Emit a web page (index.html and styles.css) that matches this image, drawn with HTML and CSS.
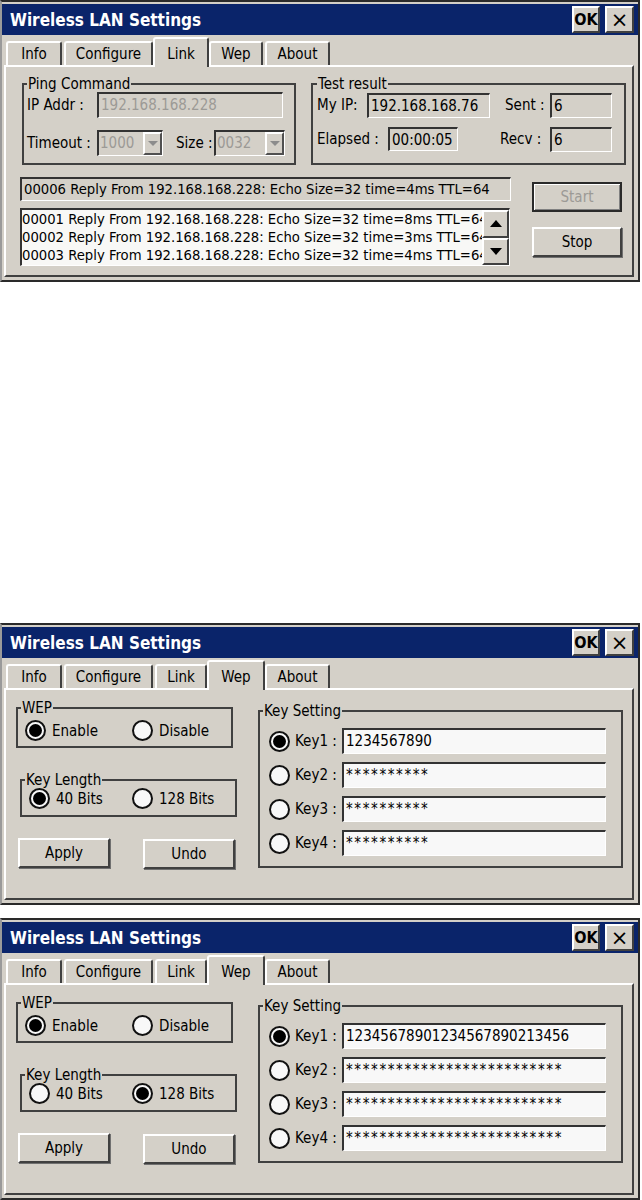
FILE: index.html
```html
<!DOCTYPE html>
<html lang="en">
<head>
    <meta charset="UTF-8">
    <meta name="viewport" content="width=device-width, initial-scale=1.0">
    <title>Wireless LAN Settings</title>
    <link rel="stylesheet" href="styles.css">
</head>
<body>
    <!-- Link page -->
    <div class="dialog">
        <div class="titlebar">
            <span class="title">Wireless LAN Settings</span>
            <span class="tbtn ok">OK</span>
            <span class="tbtn close">&#215;</span>
        </div>
        <div class="tabs">
            <div class="tab t-info">Info</div>
            <div class="tab t-conf">Configure</div>
            <div class="tab t-link active">Link</div>
            <div class="tab t-wep">Wep</div>
            <div class="tab t-about">About</div>
        </div>
        <div class="panel">
            <div class="groups">
                <fieldset class="group ping">
                    <legend>Ping Command</legend>
                    <div class="row">
                        <span class="lbl w70">IP Addr :</span>
                        <div class="edit disabled ip-addr">192.168.168.228</div>
                    </div>
                    <div class="row">
                        <span class="lbl w70">Timeout :</span>
                        <div class="combo c-timeout"><span class="combo-text">1000</span><span class="combo-btn"></span></div>
                        <span class="lbl size-lbl">Size :</span>
                        <div class="combo c-size"><span class="combo-text">0032</span><span class="combo-btn"></span></div>
                    </div>
                </fieldset>
                <fieldset class="group result">
                    <legend>Test result</legend>
                    <div class="row">
                        <span class="lbl myip-lbl">My IP:</span>
                        <div class="edit myip">192.168.168.76</div>
                        <span class="lbl sent-lbl">Sent :</span>
                        <div class="edit count">6</div>
                    </div>
                    <div class="row row2">
                        <span class="lbl elapsed-lbl">Elapsed :</span>
                        <div class="edit elapsed">00:00:05</div>
                        <span class="lbl recv-lbl">Recv :</span>
                        <div class="edit count">6</div>
                    </div>
                </fieldset>
            </div>
            <div class="log">
                <div class="log-left">
                    <div class="edit status">00006 Reply From 192.168.168.228: Echo Size=32 time=4ms TTL=64</div>
                    <div class="listbox">
                        <div class="lines">
                            <div>00001 Reply From 192.168.168.228: Echo Size=32 time=8ms TTL=64</div>
                            <div>00002 Reply From 192.168.168.228: Echo Size=32 time=3ms TTL=64</div>
                            <div>00003 Reply From 192.168.168.228: Echo Size=32 time=4ms TTL=64</div>
                        </div>
                        <div class="vscroll">
                            <span class="sb-btn"><span class="arrow up"></span></span>
                            <span class="sb-btn"><span class="arrow down"></span></span>
                        </div>
                    </div>
                </div>
                <div class="log-right">
                    <div class="btn default disabled">Start</div>
                    <div class="btn stop">Stop</div>
                </div>
            </div>
        </div>
    </div>

    <!-- Wep page, 40 bits -->
    <div class="dialog second">
        <div class="titlebar">
            <span class="title">Wireless LAN Settings</span>
            <span class="tbtn ok">OK</span>
            <span class="tbtn close">&#215;</span>
        </div>
        <div class="tabs">
            <div class="tab t-info">Info</div>
            <div class="tab t-conf">Configure</div>
            <div class="tab t-link">Link</div>
            <div class="tab t-wep active">Wep</div>
            <div class="tab t-about">About</div>
        </div>
        <div class="panel wep-panel">
            <div class="wep-left">
                <fieldset class="group wep-box">
                    <legend>WEP</legend>
                    <div class="opts">
                        <span class="opt first"><span class="radio on"></span>Enable</span>
                        <span class="opt"><span class="radio"></span>Disable</span>
                    </div>
                </fieldset>
                <fieldset class="group keylen-box">
                    <legend>Key Length</legend>
                    <div class="opts">
                        <span class="opt first"><span class="radio on"></span>40 Bits</span>
                        <span class="opt"><span class="radio"></span>128 Bits</span>
                    </div>
                </fieldset>
                <div class="actions">
                    <div class="btn apply">Apply</div>
                    <div class="btn undo">Undo</div>
                </div>
            </div>
            <fieldset class="group keys-box">
                <legend>Key Setting</legend>
                <div class="key-row">
                    <span class="radio on"></span><span class="lbl key-lbl">Key1 :</span>
                    <div class="edit key">1234567890</div>
                </div>
                <div class="key-row">
                    <span class="radio"></span><span class="lbl key-lbl">Key2 :</span>
                    <div class="edit key masked">**********</div>
                </div>
                <div class="key-row">
                    <span class="radio"></span><span class="lbl key-lbl">Key3 :</span>
                    <div class="edit key masked">**********</div>
                </div>
                <div class="key-row">
                    <span class="radio"></span><span class="lbl key-lbl">Key4 :</span>
                    <div class="edit key masked">**********</div>
                </div>
            </fieldset>
        </div>
    </div>

    <!-- Wep page, 128 bits -->
    <div class="dialog third">
        <div class="titlebar">
            <span class="title">Wireless LAN Settings</span>
            <span class="tbtn ok">OK</span>
            <span class="tbtn close">&#215;</span>
        </div>
        <div class="tabs">
            <div class="tab t-info">Info</div>
            <div class="tab t-conf">Configure</div>
            <div class="tab t-link">Link</div>
            <div class="tab t-wep active">Wep</div>
            <div class="tab t-about">About</div>
        </div>
        <div class="panel wep-panel">
            <div class="wep-left">
                <fieldset class="group wep-box">
                    <legend>WEP</legend>
                    <div class="opts">
                        <span class="opt first"><span class="radio on"></span>Enable</span>
                        <span class="opt"><span class="radio"></span>Disable</span>
                    </div>
                </fieldset>
                <fieldset class="group keylen-box">
                    <legend>Key Length</legend>
                    <div class="opts">
                        <span class="opt first"><span class="radio"></span>40 Bits</span>
                        <span class="opt"><span class="radio on"></span>128 Bits</span>
                    </div>
                </fieldset>
                <div class="actions">
                    <div class="btn apply">Apply</div>
                    <div class="btn undo">Undo</div>
                </div>
            </div>
            <fieldset class="group keys-box">
                <legend>Key Setting</legend>
                <div class="key-row">
                    <span class="radio on"></span><span class="lbl key-lbl">Key1 :</span>
                    <div class="edit key">12345678901234567890213456</div>
                </div>
                <div class="key-row">
                    <span class="radio"></span><span class="lbl key-lbl">Key2 :</span>
                    <div class="edit key masked">**************************</div>
                </div>
                <div class="key-row">
                    <span class="radio"></span><span class="lbl key-lbl">Key3 :</span>
                    <div class="edit key masked">**************************</div>
                </div>
                <div class="key-row">
                    <span class="radio"></span><span class="lbl key-lbl">Key4 :</span>
                    <div class="edit key masked">**************************</div>
                </div>
            </fieldset>
        </div>
    </div>
</body>
</html>
```

FILE: styles.css
```css
body {
    margin: 0;
    background-color: #ffffff;
    font-family: "DejaVu Sans Condensed", "Liberation Sans", sans-serif;
    font-size: 15px;
    color: #000;
}
.dialog {
    width: 640px;
    height: 282px;
    box-sizing: border-box;
    border: 2px solid #2a2a2a;
    border-left-color: #9a9a9a;
    padding-top: 2px;
    background-color: #d4d0c8;
}
.second {
    margin-top: 341px;
}
.third {
    margin-top: 13px;
}
.titlebar {
    height: 31px;
    display: flex;
    align-items: center;
    padding: 0 4px 0 8px;
    background-color: #0a246a;
}
.title {
    flex: 1;
    color: #fff;
    font-weight: bold;
    font-size: 17px;
}
.tbtn {
    height: 27px;
    box-sizing: border-box;
    display: flex;
    align-items: center;
    justify-content: center;
    background-color: #d4d0c8;
    border: 2px solid;
    border-color: #fff #404040 #404040 #fff;
}
.ok {
    width: 28px;
    margin-right: 5px;
    font-weight: bold;
    font-size: 16px;
}
.close {
    width: 29px;
    font-family: "DejaVu Sans", sans-serif;
    font-size: 21px;
}

/* tabs */
.tabs {
    height: 30px;
    display: flex;
    align-items: flex-end;
    gap: 2px;
    padding-left: 4px;
}
.tab {
    height: 21px;
    padding-top: 1px;
    border: 2px solid;
    border-bottom: 0;
    border-color: #fff #404040 transparent #fff;
    border-radius: 3px 3px 0 0;
    text-align: center;
    line-height: 20px;
}
.t-info { width: 52px; }
.t-conf { width: 85px; }
.t-link { width: 48px; }
.t-wep { width: 50px; }
.t-about { width: 61px; }
.tab.active {
    height: 23px;
    padding: 5px 2px 0;
    margin: 0 -2px -2px;
    position: relative;
    z-index: 1;
    background-color: #d4d0c8;
}
.panel {
    height: 212px;
    box-sizing: border-box;
    margin: 0 4px 0 2px;
    border: 2px solid;
    border-color: #fff #404040 #404040 #fff;
}

/* common controls */
.group {
    margin: 0;
    padding: 0 3px;
    min-width: 0;
    box-sizing: border-box;
    border: 2px solid #404040;
}
.group legend {
    padding: 0 1px;
    line-height: 16px;
}
.row {
    display: flex;
    align-items: center;
    height: 26px;
}
.lbl {
    white-space: nowrap;
}
.edit {
    box-sizing: border-box;
    height: 26px;
    padding: 0 2px;
    border-style: solid;
    border-width: 2px 1px 1px 2px;
    border-color: #333 #fff #fff #333;
    background-color: #d4d0c8;
    white-space: nowrap;
    overflow: hidden;
    line-height: 22px;
}
.disabled {
    color: #9c9a96;
}
.btn {
    box-sizing: border-box;
    width: 90px;
    height: 30px;
    display: flex;
    align-items: center;
    justify-content: center;
    border: 2px solid;
    border-color: #fff #404040 #404040 #fff;
    box-shadow: 1px 1px 0 #707070;
}
.btn.default {
    border-color: #2a2a2a;
    box-shadow: inset 1px 1px 0 #fff, inset -1px -1px 0 #808080;
}
.radio {
    width: 21px;
    height: 21px;
    flex: none;
    box-sizing: border-box;
    border-radius: 50%;
    border: 2px solid #111;
    background-color: #f8f8f8;
    position: relative;
}
.radio.on::after {
    content: "";
    position: absolute;
    inset: 2px;
    border-radius: 50%;
    background-color: #000;
}

/* link page */
.groups {
    display: flex;
    align-items: flex-start;
    gap: 15px;
    margin: 9px 0 0 16px;
}
.ping {
    width: 274px;
    height: 89px;
}
.result {
    width: 315px;
    height: 89px;
    padding-left: 4px;
}
.row + .row {
    margin-top: 12px;
}
.result .row2 {
    margin-top: 8px;
}
.w70 { width: 70px; }
.ip-addr { width: 186px; }
.size-lbl {
    width: 38px;
    margin-left: 13px;
}
.combo {
    box-sizing: border-box;
    height: 26px;
    display: flex;
    border-style: solid;
    border-width: 2px 1px 1px 2px;
    border-color: #333 #fff #fff #333;
}
.c-timeout { width: 66px; }
.c-size { width: 71px; }
.combo-text {
    flex: 1;
    padding-left: 1px;
    color: #9c9a96;
    line-height: 22px;
    overflow: hidden;
}
.combo-btn {
    width: 19px;
    box-sizing: border-box;
    border: 2px solid;
    border-color: #fff #505050 #505050 #fff;
    display: flex;
    align-items: center;
    justify-content: center;
}
.combo-btn::after {
    content: "";
    border-left: 5px solid transparent;
    border-right: 5px solid transparent;
    border-top: 5px solid #8c8c8c;
}
.myip-lbl { width: 50px; }
.myip {
    width: 123px;
    height: 25px;
}
.sent-lbl {
    width: 45px;
    margin-left: 15px;
}
.count {
    width: 62px;
    height: 25px;
}
.elapsed-lbl { width: 71px; }
.elapsed {
    width: 70px;
    height: 24px;
}
.recv-lbl {
    width: 50px;
    margin-left: 42px;
}
.log {
    display: flex;
    margin: 12px 0 0 14px;
}
.log-left {
    width: 491px;
}
.status {
    width: 491px;
    height: 24px;
    line-height: 20px;
    font-size: 14.7px;
}
.listbox {
    width: 490px;
    height: 58px;
    margin-top: 7px;
    display: flex;
    box-sizing: border-box;
    border-style: solid;
    border-width: 2px 1px 1px 2px;
    border-color: #333 #fff #fff #333;
    background-color: #f8f8f6;
    font-size: 14.7px;
}
.lines {
    flex: 1;
    overflow: hidden;
    white-space: nowrap;
    line-height: 18px;
}
.vscroll {
    width: 27px;
    display: flex;
    flex-direction: column;
}
.sb-btn {
    flex: 1;
    box-sizing: border-box;
    border: 2px solid;
    border-color: #fff #404040 #404040 #fff;
    background-color: #d4d0c8;
    display: flex;
    align-items: center;
    justify-content: center;
}
.arrow {
    border-left: 6px solid transparent;
    border-right: 6px solid transparent;
}
.arrow.up { border-bottom: 7px solid #000; }
.arrow.down { border-top: 7px solid #000; }
.log-right {
    display: flex;
    flex-direction: column;
    margin-left: 21px;
}
.log-right .default {
    margin-top: 5px;
    color: #9c9a96;
}
.stop {
    margin-top: 15px;
}

/* wep page */
.wep-panel {
    display: flex;
    align-items: flex-start;
}
.wep-left {
    width: 221px;
    margin-left: 10px;
}
.wep-box {
    width: 217px;
    height: 48px;
    margin-top: 10px;
}
.keylen-box {
    width: 217px;
    height: 45px;
    margin: 24px 0 0 4px;
}
.opts {
    display: flex;
    align-items: center;
}
.wep-box .opts {
    margin-top: 4px;
}
.opt {
    display: flex;
    align-items: center;
    gap: 6px;
}
.opt.first {
    margin-left: 4px;
    width: 107px;
}
.keylen-box .opt.first {
    width: 103px;
}
.actions {
    display: flex;
    align-items: flex-start;
    margin: 21px 0 0 2px;
}
.apply, .undo {
    width: 92px;
}
.undo {
    margin: 1px 0 0 33px;
}
.keys-box {
    width: 365px;
    height: 165px;
    margin: 13px 0 0 21px;
}
.key-row {
    display: flex;
    align-items: center;
    height: 26px;
    margin-top: 8px;
}
.key-row:first-of-type {
    margin-top: 9px;
}
.key-row .radio {
    margin-left: 6px;
}
.key-lbl {
    width: 47px;
    margin-left: 5px;
}
.key {
    width: 264px;
    background-color: #f8f8f8;
}
.masked {
    letter-spacing: 1.6px;
}
```
